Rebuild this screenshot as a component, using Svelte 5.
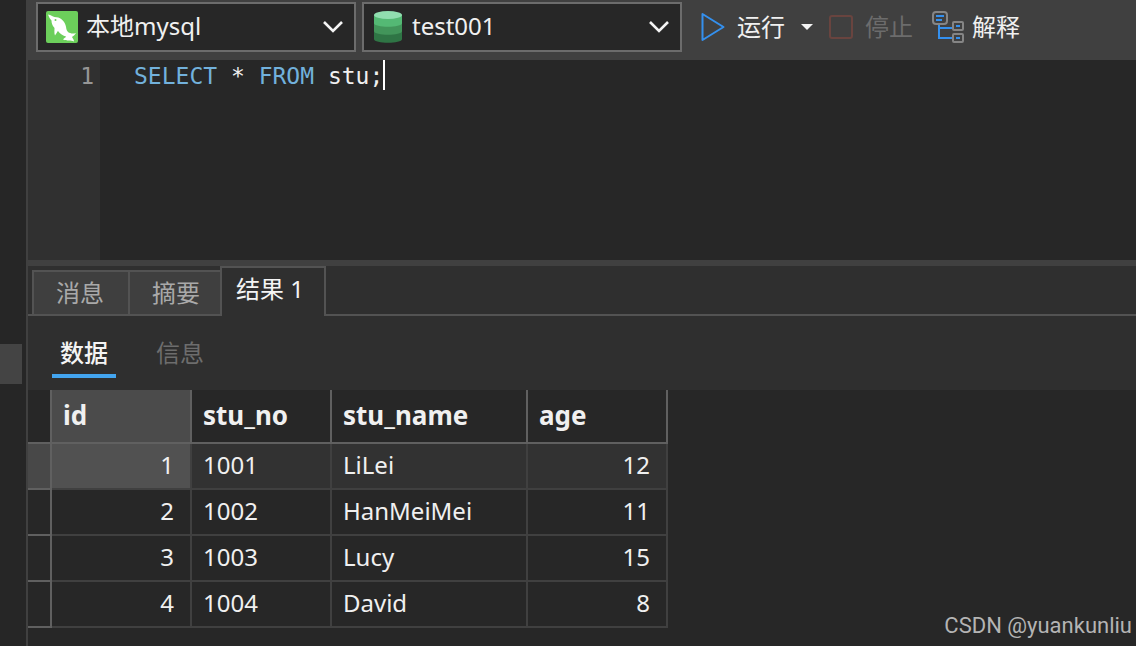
<script>
	let connection = $state('本地mysql')
	let database = $state('test001')
	let sql = $state('SELECT * FROM stu;')
	let tab = $state('结果 1')
	let view = $state('数据')
	let selected = $state(1)

	const tabs = ['消息', '摘要', '结果 1']
	const views = ['数据', '信息']
	const rows = [
		{ id: 1, stu_no: '1001', stu_name: 'LiLei', age: 12 },
		{ id: 2, stu_no: '1002', stu_name: 'HanMeiMei', age: 11 },
		{ id: 3, stu_no: '1003', stu_name: 'Lucy', age: 15 },
		{ id: 4, stu_no: '1004', stu_name: 'David', age: 8 }
	]

	const keywords = ['SELECT', 'FROM', 'WHERE', 'ORDER', 'BY', 'LIMIT']
	let words = $derived(sql.split(/(\s+)/))
</script>

{#snippet chevron()}
	<svg class="chevron" width="20" height="14" viewBox="0 0 20 14">
		<path d="M1 2l9 9 9-9" fill="none" stroke="#f4f4f4" stroke-width="2.6" />
	</svg>
{/snippet}

<div class="app">
	<aside><div class="handle"></div></aside>

	<main>
		<div class="toolbar">
			<div class="combo">
				<svg width="32" height="32" viewBox="0 0 32 32">
					<rect width="32" height="32" rx="2" fill="#6ccf5b" />
					<path d="M2 3.5C5 4 6.500 5.500 8.500 6C14 6 18 9.500 19.500 14C20.500 17 20 19 22 21C24 22.500 27 23 30 22C29 24 27 25 26 26C27 27.500 28 29 28 30.500C25 29 21 30.500 17 28.500C18 27 20 26.500 20 25.500C17 24.500 14 23 12 20C11 21 10.500 22.500 9 24.500C8 22 8.500 19.500 8.500 17C6 14 5.500 12 5.500 9.500C4 8 3 6 2 3.500Z" fill="#fff" />
					<circle cx="9.500" cy="9" r="1" fill="#6ccf5b" />
				</svg>
				<select aria-label="连接" bind:value={connection}>
					<option>本地mysql</option>
				</select>
				{@render chevron()}
			</div>
			<div class="combo">
				<svg width="32" height="32" viewBox="0 0 32 32">
					<path d="M2 4V28C2 33 30 33 30 28V4Z" fill="#2f7545" />
					<path d="M2 4V20C2 25 30 25 30 20V4Z" fill="#42955a" />
					<path d="M2 4V12C2 17 30 17 30 12V4Z" fill="#54b974" />
					<ellipse cx="16" cy="4" rx="14" ry="4" fill="#91deb0" />
				</svg>
				<select aria-label="数据库" bind:value={database}>
					<option>test001</option>
				</select>
				{@render chevron()}
			</div>
			<button class="run">
				<svg width="24" height="30" viewBox="0 0 24 30">
					<path d="M1.5 2V28L22.5 15Z" fill="none" stroke="#3490ee" stroke-width="2" stroke-linejoin="round" />
				</svg>
				运行
			</button>
			<button class="more" aria-label="更多">
				<svg width="12" height="6" viewBox="0 0 12 6"><path d="M0 0H12L6 6Z" fill="#f4f4f4" /></svg>
			</button>
			<button class="stop" disabled>
				<svg width="24" height="24" viewBox="0 0 24 24">
					<rect x="1" y="1" width="22" height="22" rx="2" fill="none" stroke="#69443f" stroke-width="2" />
				</svg>
				停止
			</button>
			<button class="explain">
				<svg width="32" height="32" viewBox="0 0 32 32" fill="none" stroke-width="2">
					<path d="M7 14V27H20M7 17H20" stroke="#3490ee" />
					<rect x="1" y="1" width="14" height="12" rx="3" stroke="#858585" />
					<path d="M4 5H12M4 9H10" stroke="#3490ee" />
					<rect x="21" y="11" width="10" height="8" rx="1" stroke="#858585" />
					<rect x="21" y="23" width="10" height="8" rx="1" stroke="#858585" />
					<path d="M24 15H28M24 27H28" stroke="#3490ee" />
				</svg>
				解释
			</button>
		</div>

		<div class="editor">
			<div class="gutter">1</div>
			<div class="code">
				<pre>{#each words as w}<span class:keyword={keywords.includes(w.toUpperCase())}>{w}</span>{/each}<i class="caret"></i></pre>
				<textarea aria-label="SQL" spellcheck="false" bind:value={sql}></textarea>
			</div>
		</div>

		<div class="tabs" role="tablist">
			{#each tabs as t}
				<button role="tab" aria-selected={tab === t} class:active={tab === t} onclick={() => (tab = t)}>{t}</button>
			{/each}
			<div class="rest"></div>
		</div>

		<div class="views">
			{#each views as v}
				<button class:active={view === v} onclick={() => (view = v)}>{v}</button>
			{/each}
		</div>

		<div class="result">
			<table>
				<colgroup>
					<col class="c-mark" /><col class="c-std" /><col class="c-std" /><col class="c-name" /><col class="c-std" />
				</colgroup>
				<thead>
					<tr>
						<td class="mark"></td>
						<th class="current">id</th>
						<th>stu_no</th>
						<th>stu_name</th>
						<th>age</th>
					</tr>
				</thead>
				<tbody>
					{#each rows as row}
						<tr class:selected={row.id === selected} onclick={() => (selected = row.id)}>
							<td class="mark"></td>
							<td class="num id">{row.id}</td>
							<td>{row.stu_no}</td>
							<td>{row.stu_name}</td>
							<td class="num">{row.age}</td>
						</tr>
					{/each}
				</tbody>
			</table>
		</div>
	</main>

	<div class="watermark">CSDN @yuankunliu</div>
</div>

<style>
	:global(body) {
		margin: 0;
		background: #272727;
	}

	.app {
		position: relative;
		display: flex;
		min-height: 100vh;
		color: #f0f0f0;
		font-family: "Noto Sans", "Noto Sans CJK SC", sans-serif;
		font-size: 24px;
		line-height: 32px;
	}

	.app, .app * {
		box-sizing: border-box;
	}

	button, select, textarea {
		margin: 0;
		padding: 0;
		border: 0;
		background: none;
		color: inherit;
		font: inherit;
	}

	svg {
		flex: none;
		display: block;
	}

	aside {
		flex: none;
		width: 28px;
		padding-top: 344px;
		border-right: 2px solid #404040;
		background: #262626;
	}

	.handle {
		width: 22px;
		height: 40px;
		background: #444;
	}

	main {
		flex: 1;
		min-width: 0;
		display: flex;
		flex-direction: column;
	}

	/* toolbar */
	.toolbar {
		display: flex;
		align-items: center;
		height: 60px;
		padding: 0 8px 6px;
		background: #404040;
	}

	.combo {
		flex: 0 1 320px;
		display: flex;
		align-items: center;
		gap: 8px;
		height: 50px;
		margin-right: 6px;
		padding: 0 11px 0 8px;
		border: 2px solid #6c6c6c;
		background: #272727;
	}

	.combo select {
		flex: 1;
		min-width: 0;
		height: 40px;
		padding-bottom: 2px;
		appearance: none;
		outline: none;
	}

	.combo option {
		background: #272727;
	}

	.toolbar button {
		flex: none;
		display: flex;
		align-items: center;
		white-space: nowrap;
	}

	.run {
		gap: 12px;
		margin-left: 13px;
	}

	.toolbar .more {
		height: 32px;
		padding: 0 16px;
	}

	.stop {
		gap: 12px;
	}

	.toolbar .stop {
		color: #6c6c6c;
	}

	.explain {
		gap: 8px;
		margin-left: 19px;
	}

	/* sql editor */
	.editor {
		display: flex;
		height: 200px;
		font-family: "DejaVu Sans Mono", monospace;
		font-size: 23px;
		background: #272727;
	}

	.gutter {
		flex: none;
		width: 72px;
		padding-right: 6px;
		background: #303030;
		color: #969696;
		text-align: right;
	}

	.code {
		position: relative;
		flex: 1;
	}

	pre, textarea {
		margin: 0;
		padding: 0 0 0 34px;
		font: inherit;
		white-space: pre;
	}

	textarea {
		position: absolute;
		inset: 0;
		width: 100%;
		height: 100%;
		padding-left: 34px;
		color: transparent;
		resize: none;
		outline: none;
		overflow: hidden;
	}

	.keyword {
		color: #72b1dc;
	}

	.caret {
		display: inline-block;
		width: 2px;
		height: 30px;
		background: #fff;
		vertical-align: top;
	}

	/* result tabs */
	.tabs {
		display: flex;
		align-items: flex-end;
		height: 56px;
		padding-left: 4px;
		border-top: 6px solid #404040;
		background: linear-gradient(#535353, #535353) left bottom / 4px 2px no-repeat #2f2f2f;
	}

	.tabs button {
		height: 46px;
		padding: 0 24px 0 22px;
		border: 2px solid #535353;
		border-right-width: 0;
		background: #3f3f3f;
		color: #a9a9a9;
	}

	.tabs button:nth-child(2) {
		padding-right: 20px;
	}

	.tabs button.active {
		height: 50px;
		padding: 0 20px 6px 14px;
		border-right-width: 2px;
		border-bottom: 0;
		background: #2f2f2f;
		color: #f4f4f4;
	}

	.rest {
		flex: 1;
		border-bottom: 2px solid #535353;
	}

	.views {
		display: flex;
		gap: 32px;
		height: 74px;
		padding: 20px 24px 0;
		background: #2f2f2f;
	}

	.views button {
		height: 42px;
		padding: 0 8px 4px;
		border-bottom: 4px solid transparent;
		color: #6d6d6d;
	}

	.views button.active {
		border-color: #43a5f0;
		color: #f4f4f4;
		font-weight: 500;
	}

	/* data grid */
	.result {
		flex: 1;
		background: #272727;
	}

	table {
		width: 640px;
		table-layout: fixed;
		border-collapse: separate;
		border-spacing: 0;
	}

	.c-mark {
		width: 24px;
	}

	.c-std {
		width: 140px;
	}

	.c-name {
		width: 196px;
	}

	th, td {
		height: 46px;
		padding: 0 16px 2px 11px;
		border-right: 2px solid #404040;
		border-bottom: 2px solid #404040;
		text-align: left;
	}

	th, thead td {
		height: 54px;
		border-color: #606060;
		font-size: 26px;
	}

	th.current {
		background: #4b4b4b;
	}

	.mark {
		padding: 0;
		border-color: #606060;
	}

	.num {
		text-align: right;
	}

	.selected td {
		background: #323232;
	}

	.selected .mark {
		background: #484848;
	}

	.selected .id {
		background: #515151;
	}

	.watermark {
		position: absolute;
		right: 4px;
		bottom: 4px;
		color: #b4b4b4;
		font-family: Roboto, sans-serif;
		font-size: 22px;
		pointer-events: none;
	}
</style>
